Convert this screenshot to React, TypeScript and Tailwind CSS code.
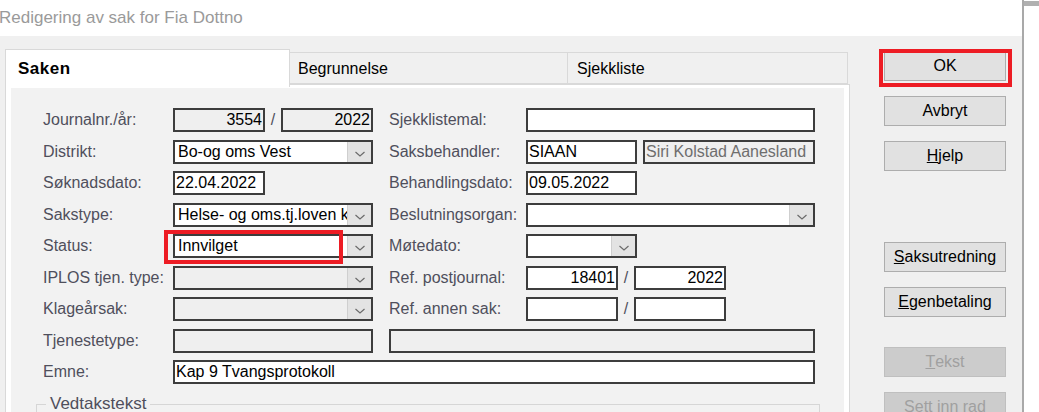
import React from "react";

const font = { fontFamily: '"Liberation Sans", Arial, sans-serif' };

// little chevron used in the combo buttons
function Chevron() {
  return (
    <svg width="12" height="8" viewBox="0 0 12 8">
      <path d="M1.5 2 L6 6 L10.5 2" fill="none" stroke="#6b6b6b" strokeWidth="1.2" />
    </svg>
  );
}

function Field({
  w,
  value = "",
  right = false,
  disabled = false,
  muted = false,
}: {
  w: string;
  value?: string;
  right?: boolean;
  disabled?: boolean;
  muted?: boolean;
}) {
  return (
    <div
      className={`${w} h-[24px] border-2 border-[#3d3d3d] flex items-center px-[1px] leading-none ${
        disabled ? "bg-[#efefef]" : "bg-white"
      } ${right ? "justify-end" : ""} ${muted ? "text-[#6e6e6e]" : "text-black"}`}
    >
      {value}
    </div>
  );
}

function Combo({ w, value = "", disabled = false }: { w: string; value?: string; disabled?: boolean }) {
  return (
    <div
      className={`${w} h-[24px] border-2 border-[#3d3d3d] flex items-stretch ${
        disabled ? "bg-[#efefef]" : "bg-white"
      }`}
    >
      <div className="flex-1 flex items-center pl-[3px] overflow-hidden whitespace-nowrap text-black leading-none">
        {value}
      </div>
      <div className="w-[24px] bg-[#e3e3e3] border-l border-[#cfcfcf] flex items-end justify-center pb-[4px]">
        <Chevron />
      </div>
    </div>
  );
}

function Label({ children, w = "w-[130px]" }: { children: React.ReactNode; w?: string }) {
  return <div className={`${w} shrink-0 text-[#4f4f5c] leading-none`}>{children}</div>;
}

function Slash() {
  return <div className="w-[16px] text-center text-[#4f4f5c]">/</div>;
}

function Btn({
  children,
  disabled = false,
  className = "",
}: {
  children: React.ReactNode;
  disabled?: boolean;
  className?: string;
}) {
  return (
    <div
      className={`w-[122px] h-[30px] border flex items-center justify-center ${
        disabled ? "bg-[#cccccc] border-[#bfbfbf] text-[#a0a0a0]" : "bg-[#e1e1e1] border-[#adadad] text-black"
      } ${className}`}
    >
      {children}
    </div>
  );
}

export default function App() {
  return (
    <div className="w-[1039px] h-[412px] overflow-hidden bg-white flex text-[16px]" style={font}>
      {/* Dialog window */}
      <div className="w-[1022px] flex flex-col">
        <div className="h-[36px] shrink-0 bg-white flex items-center text-[17px] text-[#9a9a9a] -ml-[1px]">
          Redigering av sak for Fia Dottno
        </div>

        <div className="flex-1 bg-[#f0f0f0] flex">
          {/* Tabs + panel */}
          <div className="ml-[5px] w-[845px] flex flex-col pt-[13px]">
            <div className="flex items-end h-[38px] relative z-10">
              <div className="w-[285px] h-[38px] bg-white border border-b-0 border-[#d9d9d9] flex items-start pt-[6px] pl-[12px] font-bold text-[17px] tracking-[0.5px] text-black">
                Saken
              </div>
              <div className="w-[278px] h-[32px] bg-[#f0f0f0] border border-l-0 border-[#d9d9d9] flex items-center pl-[8px] pt-[2px] text-black mb-[3px]">
                Begrunnelse
              </div>
              <div className="w-[280px] h-[32px] bg-[#f0f0f0] border border-l-0 border-[#d9d9d9] flex items-center pl-[9px] pt-[2px] text-black mb-[3px]">
                Sjekkliste
              </div>
            </div>

            <div className="flex-1 -mt-[3px] bg-white border border-[#d9d9d9] pt-[3px] px-[5px]">
              <div className="h-full bg-[#f2f2f2] pl-[32px] pt-[20px] pr-[28px]">
                <div className="flex gap-[16px]">
                  {/* left column */}
                  <div className="flex flex-col gap-[7.5px]">
                    <div className="flex items-center">
                      <Label>Journalnr./år:</Label>
                      <Field w="w-[92px]" value="3554" right disabled />
                      <Slash />
                      <Field w="w-[92px]" value="2022" right disabled />
                    </div>
                    <div className="flex items-center">
                      <Label>Distrikt:</Label>
                      <Combo w="w-[200px]" value="Bo-og oms Vest" />
                    </div>
                    <div className="flex items-center">
                      <Label>Søknadsdato:</Label>
                      <Field w="w-[92px]" value="22.04.2022" />
                    </div>
                    <div className="flex items-center">
                      <Label>Sakstype:</Label>
                      <Combo w="w-[200px]" value="Helse- og oms.tj.loven kap 9" />
                    </div>
                    <div className="flex items-center">
                      <Label>Status:</Label>
                      <div className="relative">
                        <Combo w="w-[200px]" value="Innvilget" />
                        <div className="absolute -left-[9px] -top-[4px] w-[179px] h-[34px] border-4 border-[#ed1c24]" />
                      </div>
                    </div>
                    <div className="flex items-center">
                      <Label>IPLOS tjen. type:</Label>
                      <Combo w="w-[200px]" disabled />
                    </div>
                    <div className="flex items-center">
                      <Label>Klageårsak:</Label>
                      <Combo w="w-[200px]" disabled />
                    </div>
                  </div>

                  {/* right column */}
                  <div className="flex flex-col gap-[7.5px]">
                    <div className="flex items-center">
                      <Label w="w-[137px]">Sjekklistemal:</Label>
                      <Field w="w-[289px]" />
                    </div>
                    <div className="flex items-center">
                      <Label w="w-[137px]">Saksbehandler:</Label>
                      <Field w="w-[111px]" value="SIAAN" />
                      <div className="w-[6px]" />
                      <Field w="w-[172px]" value="Siri Kolstad Aanesland" disabled muted />
                    </div>
                    <div className="flex items-center">
                      <Label w="w-[137px]">Behandlingsdato:</Label>
                      <Field w="w-[111px]" value="09.05.2022" />
                    </div>
                    <div className="flex items-center">
                      <Label w="w-[137px]">Beslutningsorgan:</Label>
                      <Combo w="w-[289px]" />
                    </div>
                    <div className="flex items-center">
                      <Label w="w-[137px]">Møtedato:</Label>
                      <Combo w="w-[111px]" />
                    </div>
                    <div className="flex items-center">
                      <Label w="w-[137px]">Ref. postjournal:</Label>
                      <Field w="w-[92px]" value="18401" right />
                      <Slash />
                      <Field w="w-[92px]" value="2022" right />
                    </div>
                    <div className="flex items-center">
                      <Label w="w-[137px]">Ref. annen sak:</Label>
                      <Field w="w-[92px]" />
                      <Slash />
                      <Field w="w-[92px]" />
                    </div>
                  </div>
                </div>

                <div className="flex items-center mt-[7.5px]">
                  <Label>Tjenestetype:</Label>
                  <Field w="w-[200px]" disabled />
                  <div className="w-[16px]" />
                  <Field w="w-[426px]" disabled />
                </div>
                <div className="flex items-center mt-[7.5px]">
                  <Label>Emne:</Label>
                  <Field w="w-[642px]" value="Kap 9 Tvangsprotokoll" />
                </div>

                {/* Vedtakstekst group */}
                <div className="relative mt-[20px] -ml-[7px] w-[784px] h-[40px] border border-[#d6d6d6]">
                  <div className="absolute -top-[10px] left-[9px] px-[4px] bg-[#f2f2f2] text-[#4f4f5c] leading-none text-[17px]">
                    Vedtakstekst
                  </div>
                </div>
              </div>
            </div>
          </div>

          {/* Button column */}
          <div className="ml-[34px] pt-[15px] flex flex-col">
            <div className="relative">
              <Btn>OK</Btn>
              <div className="absolute -left-[5px] -top-[2px] w-[133px] h-[38px] border-4 border-[#ed1c24]" />
            </div>
            <Btn className="mt-[15px]">Avbryt</Btn>
            <Btn className="mt-[15px]">
              <span className="underline">H</span>jelp
            </Btn>
            <Btn className="mt-[71px]">
              <span className="underline">S</span>aksutredning
            </Btn>
            <Btn className="mt-[15px]">
              <span className="underline">E</span>genbetaling
            </Btn>
            <Btn className="mt-[30px]" disabled>
              <span className="underline">T</span>ekst
            </Btn>
            <Btn className="mt-[15px]" disabled>
              Sett inn rad
            </Btn>
          </div>
        </div>
      </div>

      {/* edge of the window behind */}
      <div className="flex-1 border-l-2 border-[#a9a9a9] bg-white flex flex-col">
        <div className="h-[5px] mt-[1px] bg-[#b0b0b0]" />
      </div>
    </div>
  );
}
